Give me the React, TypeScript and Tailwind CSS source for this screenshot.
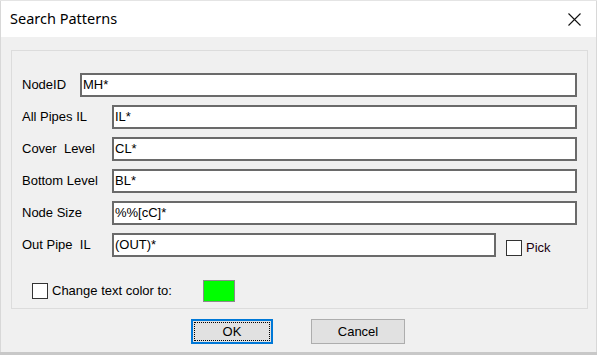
const FIELDS = [
  { label: 'NodeID', value: 'MH*', labelW: 'w-[58px]' },
  { label: 'All Pipes IL', value: 'IL*', labelW: 'w-[90px]' },
  { label: 'Cover  Level', value: 'CL*', labelW: 'w-[90px]' },
  { label: 'Bottom Level', value: 'BL*', labelW: 'w-[90px]' },
  { label: 'Node Size', value: '%%[cC]*', labelW: 'w-[90px]' },
];

function Check() {
  return <div className="w-[16px] h-[16px] bg-white border border-[#333] shrink-0" />;
}

export default function App() {
  return (
    <div className="w-[597px] h-[355px] bg-[#d8d8d8] flex flex-col font-['Liberation_Sans',Arial,sans-serif] text-[13px] text-black overflow-hidden">
      <div className="h-px bg-[#e4e4e4]" />
      <div className="flex-1 mx-px bg-[#f0f0f0] flex flex-col">
        {/* Title bar */}
        <div className="h-[36px] bg-white flex items-center justify-between pl-[9px] pr-[15px]">
          <span className="font-['Noto_Sans',sans-serif] text-[14.5px] text-black">Search Patterns</span>
          <svg width="13" height="13" viewBox="0 0 13 13">
            <path d="M0.5 0.5 L12.5 12.5 M12.5 0.5 L0.5 12.5" stroke="#111" strokeWidth="1.1" />
          </svg>
        </div>

        {/* Group box */}
        <div className="mt-[13px] ml-[10px] mr-[8px] h-[259px] border border-[#dcdcdc] pt-[22px] pl-[10px] pr-[10px] flex flex-col">
          <div className="flex flex-col gap-[8px]">
            {FIELDS.map(f => (
              <div key={f.label} className="flex items-center h-[24px]">
                <span className={`${f.labelW} whitespace-pre`}>{f.label}</span>
                <div className="flex-1 h-[24px] bg-white border-2 border-[#6a6a6a] flex items-center pl-[1px]">{f.value}</div>
              </div>
            ))}
            <div className="flex items-center h-[24px]">
              <span className="w-[90px] whitespace-pre">Out Pipe  IL</span>
              <div className="w-[384px] h-[24px] bg-white border-2 border-[#6a6a6a] flex items-center pl-[1px]">(OUT)*</div>
              <div className="ml-[10px] mt-[5px] flex items-center gap-[4px]">
                <Check />
                <span className="text-[#1a0010]">Pick</span>
              </div>
            </div>
          </div>
          <div className="mt-[23px] ml-[10px] flex items-center">
            <Check />
            <span className="ml-[4px] w-[151px]">Change text color to:</span>
            <div className="w-[32px] h-[22px] bg-[#00ff00] border border-[#8a8a8a]" />
          </div>
        </div>

        {/* Buttons */}
        <div className="mt-[10px] flex">
          <button className="ml-[190px] w-[82px] h-[25px] bg-[#e1e1e1] border-2 border-[#0078d7] p-px">
            <div className="w-full h-full border border-dotted border-black flex items-center justify-center">OK</div>
          </button>
          <button className="ml-[38px] w-[94px] h-[25px] bg-[#e1e1e1] border border-[#adadad] flex items-center justify-center">Cancel</button>
        </div>
      </div>
      <div className="h-[3px] bg-[#c8c8c8]" />
    </div>
  );
}
